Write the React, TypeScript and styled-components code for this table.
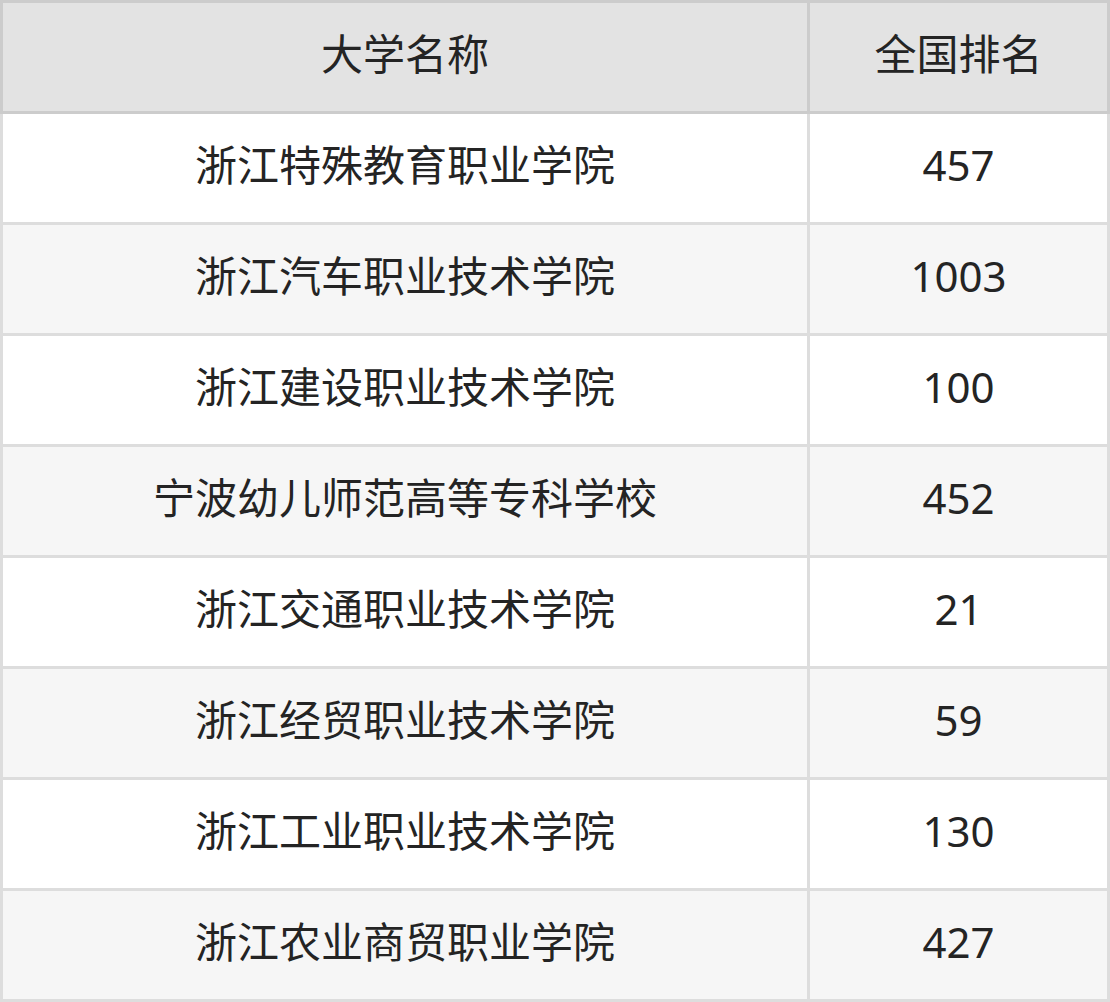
import React from 'react';
import styled, { createGlobalStyle } from 'styled-components';

interface Row {
  name: string;
  rank: string;
}

const rows: Row[] = [
  { name: '浙江特殊教育职业学院', rank: '457' },
  { name: '浙江汽车职业技术学院', rank: '1003' },
  { name: '浙江建设职业技术学院', rank: '100' },
  { name: '宁波幼儿师范高等专科学校', rank: '452' },
  { name: '浙江交通职业技术学院', rank: '21' },
  { name: '浙江经贸职业技术学院', rank: '59' },
  { name: '浙江工业职业技术学院', rank: '130' },
  { name: '浙江农业商贸职业学院', rank: '427' },
];

const App: React.FC = () => (
  <>
    <GlobalStyle />
    <Table>
      <colgroup>
        <col style={{ width: 807 }} />
        <col />
      </colgroup>
      <thead>
        <tr>
          <HeadCell>大学名称</HeadCell>
          <HeadCell>全国排名</HeadCell>
        </tr>
      </thead>
      <tbody>
        {rows.map((row, i) => (
          <BodyRow key={row.name} $striped={i % 2 === 1}>
            <Cell>{row.name}</Cell>
            <Cell>{row.rank}</Cell>
          </BodyRow>
        ))}
      </tbody>
    </Table>
  </>
);

const GlobalStyle = createGlobalStyle`
  html, body {
    margin: 0;
    padding: 0;
    background: #fff;
  }
  body {
    font-family: 'Noto Sans', 'Noto Sans CJK SC', sans-serif;
  }
`;

const Table = styled.table`
  width: 1110px;
  border-collapse: collapse;
  table-layout: fixed;
  color: #242424;
  font-size: 42px;
`;

const HeadCell = styled.th`
  height: 102px;
  padding: 0 0 6px;
  background: #e3e3e3;
  border: 3px solid #cccccc;
  font-weight: 400;
  text-align: center;
  vertical-align: middle;
  line-height: 1;
`;

const BodyRow = styled.tr<{ $striped: boolean }>`
  background: ${props => (props.$striped ? '#f6f6f6' : '#ffffff')};
`;

const Cell = styled.td`
  height: 102px;
  padding: 0 0 6px;
  border: 3px solid #dddddd;
  text-align: center;
  vertical-align: middle;
  line-height: 1;
`;

export default App;
